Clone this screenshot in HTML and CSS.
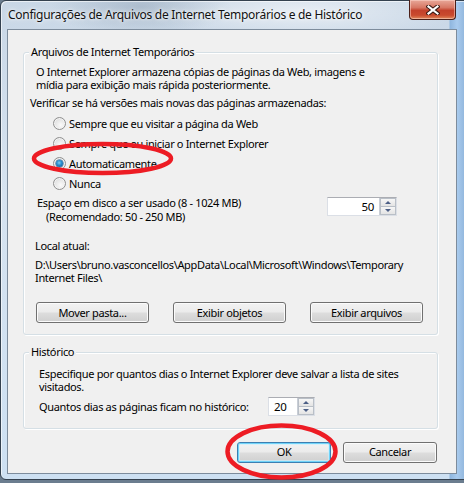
FILE: index.html
```html
<!DOCTYPE html>
<html lang="pt-BR">
<head>
<meta charset="utf-8">
<title>Configurações</title>
<link rel="stylesheet" href="styles.css">
</head>
<body>
<div class="window">
  <div class="titlebar">
    <span class="title">Configurações de Arquivos de Internet Temporários e de Histórico</span>
    <div class="close">
      <svg width="14" height="10" viewBox="0 0 14 10">
        <path d="M2.5 1.5 L11.5 8.5 M11.5 1.5 L2.5 8.5" stroke="#3a1a14" stroke-width="4.2" stroke-linecap="square" fill="none"/>
        <path d="M2.5 1.5 L11.5 8.5 M11.5 1.5 L2.5 8.5" stroke="#ffffff" stroke-width="2.2" stroke-linecap="square" fill="none"/>
      </svg>
    </div>
  </div>
  <div class="client">
    <fieldset class="group group-temp">
      <legend>Arquivos de Internet Temporários</legend>
      <p class="desc">O Internet Explorer armazena cópias de páginas da Web, imagens e<br>mídia para exibição mais rápida posteriormente.</p>
      <p class="verify">Verificar se há versões mais novas das páginas armazenadas:</p>
      <div class="radios">
        <div class="radio-row"><span class="radio"></span><span>Sempre que eu visitar a página da Web</span></div>
        <div class="radio-row"><span class="radio"></span><span>Sempre que eu iniciar o Internet Explorer</span></div>
        <div class="radio-row"><span class="radio checked"></span><span>Automaticamente</span></div>
        <div class="radio-row"><span class="radio"></span><span>Nunca</span></div>
      </div>
      <div class="disk-row">
        <div class="disk-label">
          <span>Espaço em disco a ser usado (8 - 1024 MB)</span>
          <span class="indent">(Recomendado: 50 - 250 MB)</span>
        </div>
        <div class="spinner spinner-disk">
          <span class="spin-value">50</span>
          <span class="spin-buttons"><span class="spin-btn"><span class="arrow-up"></span></span><span class="spin-btn"><span class="arrow-down"></span></span></span>
        </div>
      </div>
      <p class="loc-label">Local atual:</p>
      <p class="path">D:\Users\bruno.vasconcellos\AppData\Local\Microsoft\Windows\Temporary<br>Internet Files\</p>
      <div class="btn-row">
        <button class="btn btn-wide">Mover pasta...</button>
        <button class="btn btn-wide">Exibir objetos</button>
        <button class="btn btn-wide">Exibir arquivos</button>
      </div>
    </fieldset>
    <fieldset class="group group-hist">
      <legend>Histórico</legend>
      <p class="hist-desc">Especifique por quantos dias o Internet Explorer deve salvar a lista de sites<br>visitados.</p>
      <div class="days-row">
        <span class="days-label">Quantos dias as páginas ficam no histórico:</span>
        <div class="spinner spinner-days">
          <span class="spin-value">20</span>
          <span class="spin-buttons"><span class="spin-btn"><span class="arrow-up"></span></span><span class="spin-btn"><span class="arrow-down"></span></span></span>
        </div>
      </div>
    </fieldset>
    <div class="actions">
      <button class="btn btn-dialog btn-default">OK</button>
      <button class="btn btn-dialog">Cancelar</button>
    </div>
  </div>
</div>
<svg class="marks" width="464" height="483" viewBox="0 0 464 483">
  <ellipse cx="102.5" cy="158.5" rx="68.5" ry="14.5" fill="none" stroke="#ed1c24" stroke-width="4.5"/>
  <ellipse cx="281.5" cy="451.5" rx="54" ry="26" fill="none" stroke="#ed1c24" stroke-width="4.5"/>
</svg>
</body>
</html>
```

FILE: styles.css
```css
html, body {
  margin: 0;
  padding: 0;
}
body {
  width: 464px;
  height: 483px;
  overflow: hidden;
  position: relative;
  background: #6b7d8f;
  font-family: "Segoe UI", "Noto Sans", "Open Sans", sans-serif;
  font-size: 11px;
  letter-spacing: -0.34px;
  color: #000;
}
.window {
  box-sizing: border-box;
  width: 472px;
  height: 480px;
  border: 1px solid #34414f;
  border-radius: 6px;
  padding: 0 0 0 6px;
  display: flex;
  flex-direction: column;
  background:
    radial-gradient(ellipse 90px 30px at 140px 6px, rgba(120,140,160,0.35), rgba(120,140,160,0) 100%),
    radial-gradient(ellipse 160px 30px at 300px 10px, rgba(255,255,255,0.55), rgba(255,255,255,0) 100%),
    linear-gradient(90deg, rgba(0,0,0,0) 448px, #8fb6de 449px, #a9cbee 456px, #7fa6cf 470px),
    linear-gradient(180deg, #c9d7e6 0%, #d6e3f0 40%, #cde0f2 100%);
  box-shadow: inset 1px 1px 0 rgba(255,255,255,0.6);
}
.titlebar {
  height: 28px;
  display: flex;
  align-items: flex-start;
  position: relative;
}
.title {
  margin-top: 6px;
  margin-left: 1px;
  font-size: 12px;
  letter-spacing: -0.28px;
  line-height: 16px;
  color: #111;
  text-shadow: 0 0 6px rgba(255,255,255,0.9), 0 0 3px rgba(255,255,255,0.9);
  white-space: nowrap;
}
.close {
  position: absolute;
  left: 402px;
  top: -1px;
  width: 47px;
  height: 20px;
  box-sizing: border-box;
  border: 1px solid #4b1f18;
  border-top: none;
  border-radius: 0 0 4px 4px;
  background: linear-gradient(180deg, #e8a899 0%, #d77764 40%, #c3412b 55%, #c94a2e 80%, #e08a5c 100%);
  box-shadow: inset 0 0 0 1px rgba(255,220,210,0.5);
  display: flex;
  align-items: center;
  justify-content: center;
}
.close svg {
  display: block;
  margin-top: 1px;
}
.client {
  box-sizing: border-box;
  width: 450px;
  height: 445px;
  border: 1px solid #7d8c9c;
  background: #f0f0f0;
  padding: 15px 18px 0 15px;
  display: flex;
  flex-direction: column;
  white-space: nowrap;
}
p {
  margin: 0;
}
.group {
  margin: 0;
  padding: 0;
  border: 1px solid #d5dfe5;
  border-radius: 3px;
  box-shadow: inset 1px 1px 0 #ffffff, 1px 1px 0 #ffffff;
  min-width: 0;
}
.group legend {
  padding: 0 2px;
  margin-left: 5px;
  line-height: 14px;
  background: #f0f0f0;
}
.desc {
  margin: 5.5px 0 0 12px;
  line-height: 13px;
}
.verify {
  margin: 5.5px 0 0 6px;
  line-height: 13px;
}
.radios {
  margin: 4px 0 0 29px;
  display: flex;
  flex-direction: column;
}
.radio-row {
  height: 20px;
  display: flex;
  align-items: center;
  gap: 3px;
}
.radio {
  box-sizing: border-box;
  width: 13px;
  height: 13px;
  border-radius: 50%;
  border: 1px solid #8f8f8f;
  background: radial-gradient(circle at 60% 65%, #fbfbfb 0%, #e6e6e6 55%, #d2d2d2 100%);
  box-shadow: inset 0 0 0 1px #f4f4f4;
  display: flex;
  align-items: center;
  justify-content: center;
}
.radio.checked::after {
  content: "";
  width: 7px;
  height: 7px;
  border-radius: 50%;
  background: radial-gradient(circle at 45% 40%, #7fd0f5 0%, #2a8fd0 40%, #0c4c84 100%);
  box-shadow: 0 0 0 0.5px #1d5a8c;
}
.disk-row {
  margin: 3px 0 0 13px;
  padding-right: 40px;
  display: flex;
  justify-content: space-between;
  align-items: flex-start;
}
.disk-label {
  display: flex;
  flex-direction: column;
  line-height: 14px;
}
.indent {
  padding-left: 9px;
}
.spinner {
  box-sizing: border-box;
  height: 19px;
  margin-top: 1px;
  background: #fff;
  border: 1px solid #dbdfe6;
  border-top-color: #abadb3;
  display: flex;
  align-items: stretch;
}
.spinner-disk {
  width: 70px;
}
.spinner-days {
  width: 47px;
}
.spin-value {
  flex: 1;
  line-height: 17px;
  font-size: 11.5px;
}
.spinner-disk .spin-value {
  text-align: right;
  padding-right: 5px;
}
.spinner-days .spin-value {
  text-align: left;
  padding-left: 5px;
}
.spin-buttons {
  width: 16px;
  display: flex;
  flex-direction: column;
  border-left: 1px solid #c9ced6;
}
.spin-btn {
  flex: 1;
  display: flex;
  align-items: center;
  justify-content: center;
  background: linear-gradient(180deg, #f6f6f6, #e4e4e4);
  border: 1px solid #b9bfc7;
  margin: 0;
}
.spin-btn + .spin-btn {
  border-top: none;
}
.arrow-up {
  width: 0;
  height: 0;
  border-left: 3.5px solid transparent;
  border-right: 3.5px solid transparent;
  border-bottom: 3px solid #4c5f86;
}
.arrow-down {
  width: 0;
  height: 0;
  border-left: 3.5px solid transparent;
  border-right: 3.5px solid transparent;
  border-top: 3px solid #4c5f86;
}
.loc-label {
  margin: 15px 0 0 11px;
  line-height: 13px;
}
.path {
  margin: 5.5px 0 0 11px;
  line-height: 13px;
}
.btn-row {
  margin: 18.5px 0 11px 12px;
  display: flex;
  gap: 24px;
}
.btn {
  box-sizing: border-box;
  height: 21px;
  padding: 0;
  font: inherit;
  letter-spacing: inherit;
  color: #000;
  border: 1px solid #707070;
  border-radius: 3px;
  background: linear-gradient(180deg, #f2f2f2 0%, #ebebeb 48%, #dddddd 52%, #cfcfcf 100%);
  box-shadow: inset 0 0 0 1px #fbfbfb;
  line-height: 18px;
}
.btn-wide {
  width: 113px;
}
.group-hist {
  margin-top: 10px;
}
.hist-desc {
  margin: 7.5px 0 0 15px;
  line-height: 13px;
}
.days-row {
  margin: 4px 0 12px 15px;
  display: flex;
  align-items: center;
}
.days-label {
  width: 229px;
}
.days-row .spinner {
  margin-top: 0;
}
.actions {
  margin-top: 13px;
  display: flex;
  justify-content: flex-end;
  gap: 12px;
  padding-right: 1px;
}
.btn-dialog {
  width: 94px;
}
.btn-default {
  border-color: #3c7fb1;
  box-shadow: inset 0 0 0 1px #6fd3f9, inset 0 0 0 2px rgba(200,240,255,0.6);
}
.marks {
  position: absolute;
  left: 0;
  top: 0;
  pointer-events: none;
}
```
